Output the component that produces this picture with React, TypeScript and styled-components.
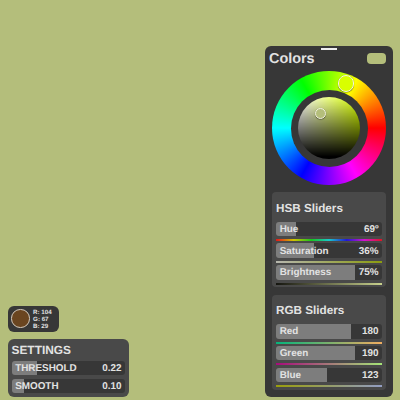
import React from "react";
import styled, { createGlobalStyle } from "styled-components";

const GlobalStyle = createGlobalStyle`
  * { box-sizing: border-box; }
  body {
    margin: 0;
    background: #b4be7b;
    font-family: "Liberation Sans", Arial, sans-serif;
    font-weight: 700;
    color: #e2e2e2;
    text-rendering: geometricPrecision;
  }
`;

const Screen = styled.main`
  width: 400px;
  height: 400px;
  overflow: hidden;
  display: flex;
  justify-content: space-between;
  align-items: flex-end;
  padding: 0 7px 3px 8px;
  background: #b4be7b;
`;

const LeftColumn = styled.div`
  display: flex;
  flex-direction: column;
  align-items: flex-start;
  gap: 7.5px;
`;

const Readout = styled.section`
  display: flex;
  align-items: center;
  gap: 3.4px;
  width: 51px;
  height: 26px;
  padding-left: 3.3px;
  border-radius: 6px;
  background: #373737;
`;

const PickedColor = styled.div`
  width: 18.4px;
  height: 18.4px;
  border-radius: 50%;
  border: 1px solid #d2c9bd;
  background: #6a4520;
`;

const Channels = styled.div`
  display: flex;
  flex-direction: column;
  padding-top: 1.5px;
  font-size: 6.2px;
  line-height: 7px;
  white-space: nowrap;
`;

const SettingsPanel = styled.section`
  display: flex;
  flex-direction: column;
  width: 120.5px;
  height: 58px;
  padding: 4px 3.5px 0;
  border-radius: 6px;
  background: #494949;
`;

const SettingsTitle = styled.h2`
  margin: 0 0 3.5px;
  font-size: 11.9px;
  line-height: 14px;
`;

const SettingsRows = styled.div`
  display: flex;
  flex-direction: column;
  gap: 3.5px;
`;

const ColorPanel = styled.aside`
  display: flex;
  flex-direction: column;
  width: 128px;
  height: 351.5px;
  padding: 2.5px 7px 7px;
  border-radius: 6px;
  background: #373737;
`;

const DragHandle = styled.div`
  align-self: center;
  width: 16px;
  height: 2px;
  background: #eeeeee;
`;

const PanelHeader = styled.header`
  display: flex;
  justify-content: space-between;
  align-items: center;
  height: 16px;
  margin: 0 0 5px -3px;
`;

const PanelTitle = styled.h1`
  margin: 0;
  padding-top: 2px;
  font-size: 14.4px;
  line-height: 17px;
`;

const CurrentColor = styled.div`
  width: 19px;
  height: 11px;
  border-radius: 4px;
  background: #b4be7b;
`;

const HueWheel = styled.div`
  position: relative;
  flex: none;
  width: 114px;
  height: 114px;
  margin-bottom: 7px;
  display: grid;
  place-items: center;
  border-radius: 50%;
  background: conic-gradient(from 90deg, #f00, #f0f, #00f, #0ff, #0f0, #ff0, #f00);
`;

const WheelHub = styled.div`
  width: 77px;
  height: 77px;
  display: grid;
  place-items: center;
  border-radius: 50%;
  background: #373737;
`;

const ShadeDisc = styled.div`
  width: 62.6px;
  height: 62.6px;
  border-radius: 50%;
  background:
    linear-gradient(to bottom, transparent 0%, #000 96%),
    linear-gradient(to right, #fff 0%, #d9ff00 100%);
`;

const WheelMarker = styled.div<{ $x: number; $y: number; $size: number; $fill: string }>`
  position: absolute;
  left: ${(p) => p.$x - p.$size / 2}px;
  top: ${(p) => p.$y - p.$size / 2}px;
  width: ${(p) => p.$size}px;
  height: ${(p) => p.$size}px;
  border: 1px solid #f4f4e0;
  border-radius: 50%;
  background: ${(p) => p.$fill};
  box-shadow: 0 0.5px 1px rgba(0, 0, 0, 0.5);
`;

const SliderGroup = styled.section`
  display: flex;
  flex-direction: column;
  flex: none;
  height: 95px;
  padding: 9.5px 4px 0;
  border-radius: 4px;
  background: #494949;

  & + & {
    margin-top: 7.5px;
  }
`;

const GroupTitle = styled.h2`
  margin: 0 0 6px;
  font-size: 11.7px;
  line-height: 14px;
`;

const SliderBlock = styled.div`
  height: 22px;
`;

const Track = styled.div<{ $fill: number }>`
  display: flex;
  justify-content: space-between;
  align-items: center;
  height: 14.5px;
  padding: 2px 3.5px 0 3.7px;
  border-radius: 3px;
  background: linear-gradient(to right, #7d7d7d ${(p) => p.$fill}px, #373737 ${(p) => p.$fill}px);
  font-size: 9.9px;
  line-height: 14px;
`;

const Ramp = styled.div<{ $colors: string }>`
  height: 2px;
  margin-top: 3px;
  background: linear-gradient(to right, ${(p) => p.$colors});
`;

type Slider = { label: string; value: string; fill: number; colors: string };

const hsb: Slider[] = [
  { label: "Hue", value: "69º", fill: 20, colors: "#e2151a, #d0c500, #16c51d, #18c8cd, #2018d5, #d313cf, #dd1622" },
  { label: "Saturation", value: "36%", fill: 38, colors: "#b6b6ae, #8b9c10" },
  { label: "Brightness", value: "75%", fill: 79, colors: "#151510, #c8d18d" },
];

const rgb: Slider[] = [
  { label: "Red", value: "180", fill: 75, colors: "#05b47b, #f0ad60" },
  { label: "Green", value: "190", fill: 79, colors: "#a80b7b, #a5e577" },
  { label: "Blue", value: "123", fill: 51, colors: "#999d0c, #929dc3" },
];

function Sliders({ title, items }: { title: string; items: Slider[] }) {
  return (
    <SliderGroup>
      <GroupTitle>{title}</GroupTitle>
      {items.map((s) => (
        <SliderBlock key={s.label}>
          <Track $fill={s.fill}>
            <span>{s.label}</span>
            <span>{s.value}</span>
          </Track>
          <Ramp $colors={s.colors} />
        </SliderBlock>
      ))}
    </SliderGroup>
  );
}

export default function App() {
  return (
    <>
      <GlobalStyle />
      <Screen>
        <LeftColumn>
          <Readout>
            <PickedColor />
            <Channels>
              <span>R: 104</span>
              <span>G: 67</span>
              <span>B: 29</span>
            </Channels>
          </Readout>
          <SettingsPanel>
            <SettingsTitle>SETTINGS</SettingsTitle>
            <SettingsRows>
              <Track $fill={25.5}>
                <span>THRESHOLD</span>
                <span>0.22</span>
              </Track>
              <Track $fill={12}>
                <span>SMOOTH</span>
                <span>0.10</span>
              </Track>
            </SettingsRows>
          </SettingsPanel>
        </LeftColumn>
        <ColorPanel>
          <DragHandle />
          <PanelHeader>
            <PanelTitle>Colors</PanelTitle>
            <CurrentColor />
          </PanelHeader>
          <HueWheel>
            <WheelHub>
              <ShadeDisc />
            </WheelHub>
            <WheelMarker $x={74} $y={12.5} $size={16.5} $fill="#d9ff00" />
            <WheelMarker $x={48.5} $y={42} $size={11} $fill="#b4be7b" />
          </HueWheel>
          <Sliders title="HSB Sliders" items={hsb} />
          <Sliders title="RGB Sliders" items={rgb} />
        </ColorPanel>
      </Screen>
    </>
  );
}
